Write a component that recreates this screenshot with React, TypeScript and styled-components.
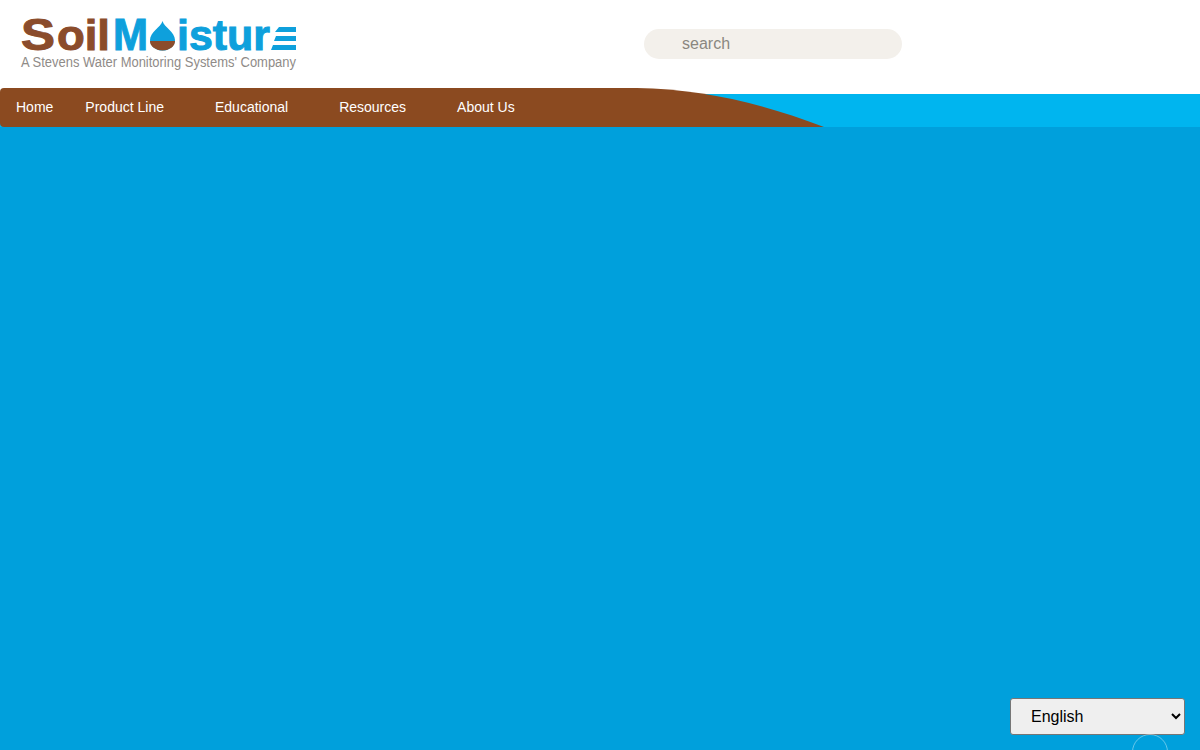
import styled, { createGlobalStyle } from 'styled-components';

const GlobalStyle = createGlobalStyle`
  html, body {
    margin: 0;
    padding: 0;
    height: 100%;
    overflow: hidden;
    background-color: #00a0dc;
    font-family: "Liberation Sans", Arial, sans-serif;
  }
`;

const navItems = [
  { label: 'Home', hasMenu: false },
  { label: 'Product Line', hasMenu: true },
  { label: 'Educational', hasMenu: true },
  { label: 'Resources', hasMenu: true },
  { label: 'About Us', hasMenu: false },
];

const Logo = () => (
  <svg width="320" height="74" viewBox="0 0 320 74" role="img" aria-label="SoilMoisture">
    <LogoText $brown x="21" y="50" fontSize="44" textLength="34" lengthAdjust="spacingAndGlyphs">S</LogoText>
    <LogoText $brown x="57" y="50" fontSize="43" textLength="53" lengthAdjust="spacingAndGlyphs">oil</LogoText>
    <LogoText x="113" y="50" fontSize="44" textLength="35" lengthAdjust="spacingAndGlyphs">M</LogoText>
    <path d="M162.5 21 C164 27 175 32 175 40 A12.5 10.5 0 0 1 150 40 C150 32 161 27 162.5 21 Z" fill="#0ea0dc" />
    <path d="M150 41 H175 A12.5 9.5 0 0 1 150 41 Z" fill="#8b4c2b" />
    <LogoText x="177" y="50" fontSize="43" textLength="93" lengthAdjust="spacingAndGlyphs">istur</LogoText>
    <path d="M279 27 H296 V32 H275 Z M276 36 H296 V41 H274 Z M273 45 H296 V50 H271 Z" fill="#0ea0dc" />
    <Tagline x="21" y="67" textLength="275" lengthAdjust="spacingAndGlyphs">A Stevens Water Monitoring Systems' Company</Tagline>
  </svg>
);

const App = () => (
  <Page>
    <GlobalStyle />
    <Header>
      <LogoLink href="#">
        <Logo />
      </LogoLink>
      <SearchBox placeholder="search" />
    </Header>
    <NavBand>
      <Nav>
        {navItems.map((item) => (
          <NavLink key={item.label} href="#" $hasMenu={item.hasMenu}>
            {item.label}
          </NavLink>
        ))}
      </Nav>
      <NavCurve width="187" height="39" viewBox="0 0 187 39" aria-hidden="true">
        <path d="M0 0 C62 1 122 14 187 39 H0 Z" fill="#8b4a20" />
      </NavCurve>
    </NavBand>
    <LanguageSelect defaultValue="en">
      <option value="en">English</option>
      <option value="es">Español</option>
      <option value="fr">Français</option>
    </LanguageSelect>
    <ScrollTop aria-label="Back to top" />
  </Page>
);

const Page = styled.div`
  position: relative;
  height: 750px;
  overflow: hidden;
  background-color: #00a0dc;
`;

const Header = styled.header`
  display: flex;
  height: 87px;
  background-color: #fff;
`;

const LogoLink = styled.a`
  display: block;
  width: 320px;
  height: 74px;
  margin-right: 324px;
`;

const LogoText = styled.text<{ $brown?: boolean }>`
  font-family: "Liberation Sans", Arial, sans-serif;
  font-weight: 700;
  fill: ${(props) => (props.$brown ? '#8b4c2b' : '#0ea0dc')};
  stroke: ${(props) => (props.$brown ? '#8b4c2b' : '#0ea0dc')};
  stroke-width: 1px;
`;

const Tagline = styled.text`
  font-family: "Liberation Sans", Arial, sans-serif;
  font-size: 14px;
  fill: #8f8b88;
`;

const SearchBox = styled.input`
  box-sizing: border-box;
  width: 258px;
  height: 30px;
  margin-top: 29px;
  padding: 0 16px 0 38px;
  border: none;
  border-radius: 15px;
  outline: none;
  background-color: #f3f0eb;
  font-family: "Liberation Sans", Arial, sans-serif;
  font-size: 16px;

  &::placeholder {
    color: #8a8780;
    opacity: 1;
  }
`;

const NavBand = styled.div`
  display: flex;
  height: 40px;
  background: linear-gradient(#fff 7px, #00b5ef 7px);
`;

const Nav = styled.nav`
  display: flex;
  align-items: center;
  gap: 32px;
  box-sizing: border-box;
  width: 637px;
  height: 39px;
  margin-top: 1px;
  padding: 0 0 2px 16px;
  border-radius: 4px 0 0 4px;
  background-color: #8b4a20;
`;

const NavLink = styled.a<{ $hasMenu: boolean }>`
  padding-right: ${(props) => (props.$hasMenu ? '19px' : '0')};
  color: #fff;
  font-size: 14px;
  text-decoration: none;
`;

const NavCurve = styled.svg`
  display: block;
  margin-top: 1px;
`;

const LanguageSelect = styled.select`
  position: absolute;
  top: 698px;
  right: 15px;
  box-sizing: border-box;
  width: 175px;
  height: 37px;
  padding-left: 16px;
  border: 1px solid #767676;
  border-radius: 3px;
  background-color: #efefef;
  color: #000;
  font-family: "Liberation Sans", Arial, sans-serif;
  font-size: 16px;
`;

const ScrollTop = styled.button`
  position: absolute;
  top: 734px;
  left: 1132px;
  width: 36px;
  height: 36px;
  padding: 0;
  border: 1px solid rgba(255, 255, 255, 0.4);
  border-radius: 50%;
  background: transparent;
`;

export default App;
